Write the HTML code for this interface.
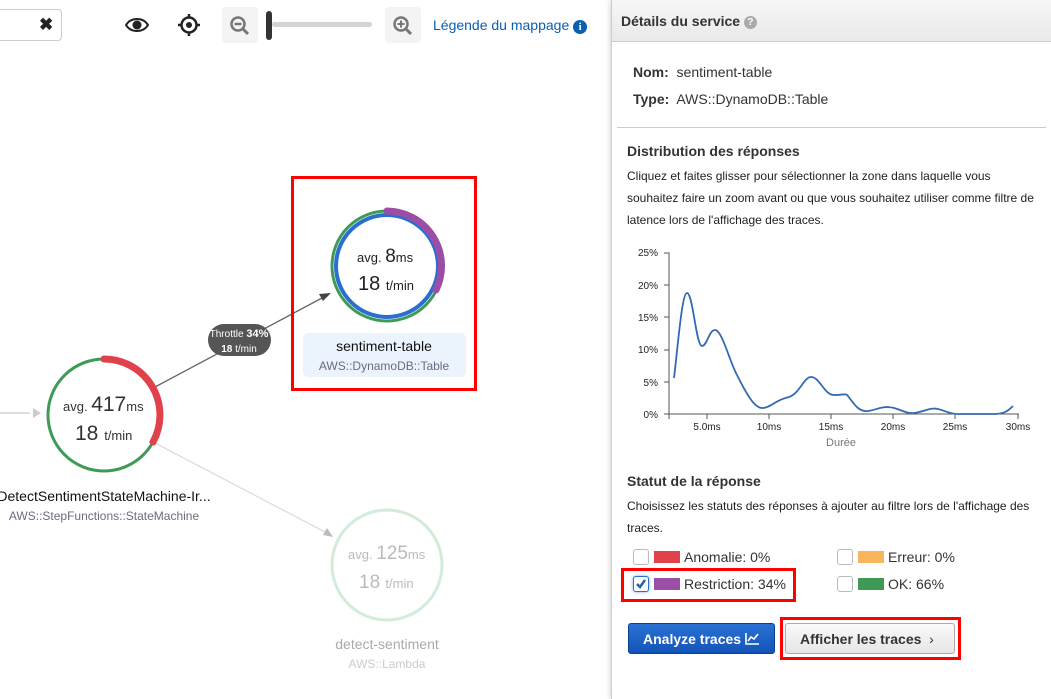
<!DOCTYPE html>
<html><head><meta charset="utf-8"><style>
*{margin:0;padding:0;box-sizing:border-box}
body{width:1051px;height:699px;overflow:hidden;background:#fff;font-family:"Liberation Sans",Arial,sans-serif;position:relative;color:#333}
.abs{position:absolute}
.panel{position:absolute;left:611px;top:0;width:440px;height:699px;border-left:1px solid #ccc;box-shadow:-2px 0 4px rgba(0,0,0,.12);background:#fff}
.hdr{height:42px;background:linear-gradient(#f7f7f7,#e9e9e9);border-bottom:1px solid #ccc;font-weight:bold;font-size:14px;padding:13px 0 0 9px;color:#333}
.lbl{font-weight:bold;font-size:14px}
.sw{display:inline-block;width:26px;height:12px;vertical-align:-1px;margin-right:4px}
.cb{position:absolute;width:16px;height:16px;border:1px solid #bbb;border-radius:3px;background:#fff}
</style></head><body>

<!-- toolbar -->
<div class="abs" style="left:-5px;top:9px;width:67px;height:32px;border:1px solid #ccc;border-radius:4px"></div>
<div class="abs" style="left:39px;top:15px;font-size:17px;font-weight:bold;color:#222">✖</div>
<svg class="abs" style="left:124px;top:14px" width="26" height="22" viewBox="0 0 26 22"><path d="M2 11 C7 3 19 3 24 11 C19 19 7 19 2 11Z" fill="none" stroke="#222" stroke-width="2"/><circle cx="13" cy="11" r="4.5" fill="#222"/></svg>
<svg class="abs" style="left:177px;top:13px" width="24" height="24" viewBox="0 0 24 24"><circle cx="12" cy="12" r="7.5" fill="none" stroke="#222" stroke-width="2.5"/><circle cx="12" cy="12" r="3" fill="#222"/><path d="M12 1v4M12 19v4M1 12h4M19 12h4" stroke="#222" stroke-width="2.5"/></svg>
<div class="abs" style="left:222px;top:7px;width:36px;height:36px;background:#f4f4f4;border-radius:4px"></div>
<svg class="abs" style="left:229px;top:15px" width="22" height="22" viewBox="0 0 22 22"><circle cx="9" cy="9" r="6.5" fill="none" stroke="#777" stroke-width="2.5"/><path d="M5.5 9h7" stroke="#777" stroke-width="2.5"/><path d="M14 14l5 5" stroke="#777" stroke-width="3"/></svg>
<div class="abs" style="left:272px;top:22px;height:5px;width:100px;background:#d4d4d4;border-radius:3px"></div>
<div class="abs" style="left:266px;top:11px;width:6px;height:29px;background:#333;border-radius:3px"></div>
<div class="abs" style="left:385px;top:7px;width:36px;height:36px;background:#f4f4f4;border-radius:4px"></div>
<svg class="abs" style="left:392px;top:15px" width="22" height="22" viewBox="0 0 22 22"><circle cx="9" cy="9" r="6.5" fill="none" stroke="#777" stroke-width="2.5"/><path d="M5.5 9h7M9 5.5v7" stroke="#777" stroke-width="2"/><path d="M14 14l5 5" stroke="#777" stroke-width="3"/></svg>
<div class="abs" style="left:433px;top:17px;font-size:14px;color:#0b5fb0">Légende du mappage <span style="display:inline-block;width:14px;height:14px;border-radius:50%;background:#0b5fb0;color:#fff;font-size:11px;font-weight:bold;text-align:center;line-height:14px;font-family:'Liberation Serif',serif">i</span></div>

<!-- graph -->
<svg class="abs" style="left:0;top:0" width="611" height="699">
  <line x1="0" y1="413" x2="30" y2="413" stroke="#ccc" stroke-width="1.3"/>
  <path d="M33 408l8 5-8 5z" fill="#ccc"/>
  <line x1="155" y1="387" x2="322" y2="298" stroke="#666" stroke-width="1.3"/>
  <path d="M331 293l-12 1 4 7z" fill="#444"/>
  <line x1="155" y1="443" x2="325" y2="532" stroke="#ddd" stroke-width="1.3"/>
  <path d="M333 537l-6-9-4 7z" fill="#bbb"/>
  <rect x="208" y="324" width="63" height="32" rx="16" fill="#555"/>
  <text x="239" y="337" font-size="10" fill="#fff" text-anchor="middle">Throttle <tspan font-weight="bold" font-size="11">34%</tspan></text>
  <text x="239" y="352" font-size="10" fill="#fff" text-anchor="middle"><tspan font-weight="bold">18</tspan> t/min</text>
  <circle cx="104" cy="415" r="56" fill="none" stroke="#3e9a55" stroke-width="3"/>
  <path d="M104 359 A56 56 0 0 1 153 442" fill="none" stroke="#e0414a" stroke-width="7" stroke-linecap="round"/>
  <text x="63" y="411" font-size="13" fill="#333">avg. <tspan font-size="21">417</tspan><tspan font-size="13">ms</tspan></text>
  <text x="75" y="440" font-size="21" fill="#333">18 <tspan font-size="13">t/min</tspan></text>
  <text x="104" y="501" font-size="14" fill="#111" text-anchor="middle">DetectSentimentStateMachine-Ir...</text>
  <text x="104" y="520" font-size="12" fill="#6b6b80" text-anchor="middle">AWS::StepFunctions::StateMachine</text>
  <rect x="292.5" y="177.5" width="183" height="212" fill="none" stroke="#f00" stroke-width="3"/>
  <circle cx="387" cy="266" r="55" fill="none" stroke="#3e9a55" stroke-width="3"/>
  <circle cx="387" cy="266" r="51" fill="none" stroke="#2a6fd0" stroke-width="4"/>
  <path d="M387 211 A55 55 0 0 1 436 290" fill="none" stroke="#9b4ea6" stroke-width="7" stroke-linecap="round"/>
  <text x="357" y="262" font-size="13" fill="#222">avg. <tspan font-size="19">8</tspan>ms</text>
  <text x="358" y="290" font-size="20" fill="#222">18 <tspan font-size="13">t/min</tspan></text>
  <rect x="303" y="333" width="163" height="44" rx="5" fill="#ebf3fd"/>
  <text x="384" y="351" font-size="14" fill="#111" text-anchor="middle">sentiment-table</text>
  <text x="384" y="370" font-size="12" fill="#6b6b80" text-anchor="middle">AWS::DynamoDB::Table</text>
  <circle cx="387" cy="565" r="55" fill="none" stroke="#d3ebd9" stroke-width="3"/>
  <text x="348" y="559" font-size="13" fill="#bbb">avg. <tspan font-size="19">125</tspan>ms</text>
  <text x="359" y="588" font-size="19" fill="#bbb">18 <tspan font-size="13">t/min</tspan></text>
  <text x="387" y="649" font-size="14" fill="#aaa" text-anchor="middle">detect-sentiment</text>
  <text x="387" y="668" font-size="12" fill="#ccc" text-anchor="middle">AWS::Lambda</text>
</svg>

<!-- panel -->
<div class="panel">
  <div class="hdr">Détails du service <span style="display:inline-block;width:13px;height:13px;border-radius:50%;background:#aaa;color:#fff;font-size:10px;text-align:center;line-height:13px;vertical-align:1px">?</span></div>
  <div class="abs" style="left:21px;top:64px;font-size:14px"><b>Nom:</b>&nbsp; sentiment-table</div>
  <div class="abs" style="left:21px;top:91px;font-size:14px"><b>Type:</b>&nbsp; AWS::DynamoDB::Table</div>
  <div class="abs" style="left:5px;top:127px;width:429px;height:1px;background:#ccc"></div>
  <div class="abs lbl" style="left:15px;top:143px">Distribution des réponses</div>
  <div class="abs" style="left:15px;top:165px;width:412px;font-size:12px;line-height:22px;color:#222">Cliquez et faites glisser pour sélectionner la zone dans laquelle vous souhaitez faire un zoom avant ou que vous souhaitez utiliser comme filtre de latence lors de l'affichage des traces.</div>
  <svg class="abs" style="left:0;top:235px" width="440" height="220">
    <g font-size="10" fill="#222" text-anchor="end">
      <text x="46" y="21">25%</text><text x="46" y="54">20%</text><text x="46" y="86">15%</text><text x="46" y="118">10%</text><text x="46" y="151">5%</text><text x="46" y="183">0%</text>
    </g>
    <path d="M52 18h5V179H52M52 50h5M52 82h5M52 115h5M52 147h5" fill="none" stroke="#555"/>
    <path d="M57 179H407M95 179v5M157 179v5M219 179v5M281 179v5M343 179v5M406 179v5M57 179v5" fill="none" stroke="#555"/>
    <g font-size="10" fill="#222" text-anchor="middle">
      <text x="95" y="195">5.0ms</text><text x="157" y="195">10ms</text><text x="219" y="195">15ms</text><text x="281" y="195">20ms</text><text x="343" y="195">25ms</text><text x="406" y="195">30ms</text>
    </g>
    <text x="229" y="211" font-size="11" fill="#777" text-anchor="middle">Durée</text>
    <path d="M62 143 C66 110 70 58 75 58 C81 58 84 111 90 111 C95 111 97 95 103 95 C110 95 117 125 125 140 C135 160 143 174 151 173 C160 172 163 165 177 162 C188 158 192 142 199 142 C208 142 212 160 222 160 C232 160 234 158 236 161 C244 172 248 177 256 176 C265 175 270 170 282 173 C292 176 296 179 302 178 C312 177 318 172 326 174 C334 176 338 179 345 179 L382 179 C392 179 396 176 401 171" fill="none" stroke="#336bb0" stroke-width="1.8"/>
  </svg>
  <div class="abs lbl" style="left:15px;top:473px">Statut de la réponse</div>
  <div class="abs" style="left:15px;top:495px;width:420px;font-size:12px;line-height:22px;color:#222">Choisissez les statuts des réponses à ajouter au filtre lors de l'affichage des traces.</div>
  <div class="cb" style="left:21px;top:549px"></div>
  <div class="abs" style="left:42px;top:549px;font-size:14px"><span class="sw" style="background:#e0414a"></span>Anomalie: 0%</div>
  <div class="cb" style="left:225px;top:549px"></div>
  <div class="abs" style="left:246px;top:549px;font-size:14px"><span class="sw" style="background:#f9b55c"></span>Erreur: 0%</div>
  <div class="cb" style="left:21px;top:576px;border-color:#2a6fd0;box-shadow:0 0 3px #7aa7e8"><svg width="14" height="14" viewBox="0 0 14 14" style="position:absolute;left:0;top:0"><path d="M3 7l3 3 5-7" fill="none" stroke="#2a5ea8" stroke-width="2.5"/></svg></div>
  <div class="abs" style="left:42px;top:576px;font-size:14px"><span class="sw" style="background:#9b4ea6"></span>Restriction: 34%</div>
  <div class="abs" style="left:9px;top:568px;width:175px;height:34px;border:3px solid #f00"></div>
  <div class="cb" style="left:225px;top:576px"></div>
  <div class="abs" style="left:246px;top:576px;font-size:14px"><span class="sw" style="background:#3e9a55"></span>OK: 66%</div>
  <div class="abs" style="left:16px;top:623px;width:147px;height:31px;border-radius:3px;background:linear-gradient(#2a72d4,#1353b8);border:1px solid #0d3f8f;color:#fff;font-weight:bold;font-size:14px;padding-top:7px;padding-left:14px">Analyze traces <svg width="15" height="13" viewBox="0 0 15 13" style="vertical-align:-1px"><path d="M1 1v11h13M3 9l3-4 3 2 4-5" fill="none" stroke="#fff" stroke-width="1.6"/></svg></div>
  <div class="abs" style="left:168px;top:617px;width:181px;height:43px;border:3px solid #f00"></div>
  <div class="abs" style="left:173px;top:623px;width:170px;height:31px;border-radius:3px;background:linear-gradient(#fafafa,#e6e6e6);border:1px solid #aaa;color:#333;font-weight:bold;font-size:14px;padding-top:7px;padding-left:14px">Afficher les traces &nbsp;<span style="font-weight:normal">›</span></div>
</div>
</body></html>
